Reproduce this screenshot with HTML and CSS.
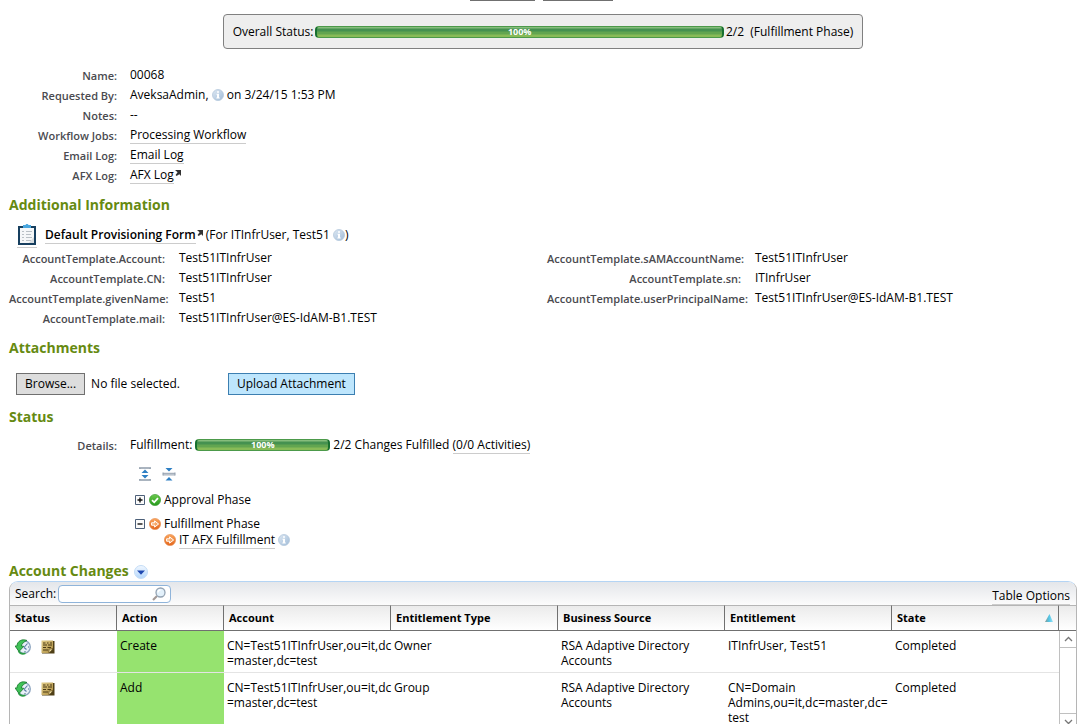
FILE: index.html
```html
<!DOCTYPE html>
<html lang="en">
<head>
<meta charset="utf-8">
<title>Change Request 00068</title>
<link rel="stylesheet" href="styles.css">
</head>
<body>
<svg class="defs" aria-hidden="true">
  <defs>
    <linearGradient id="g-info" x1="0" y1="0" x2="1" y2="1"><stop offset="0" stop-color="#dfe9f3"/><stop offset="1" stop-color="#9fbbd8"/></linearGradient>
    <linearGradient id="g-ok" x1="0" y1="0" x2="0" y2="1"><stop offset="0" stop-color="#6cc94e"/><stop offset="1" stop-color="#259a1c"/></linearGradient>
    <linearGradient id="g-go" x1="0" y1="0" x2="0" y2="1"><stop offset="0" stop-color="#f9a65e"/><stop offset="1" stop-color="#e4651b"/></linearGradient>
    <linearGradient id="g-note" x1="0" y1="0" x2="1" y2="1"><stop offset="0" stop-color="#e2cd8a"/><stop offset="1" stop-color="#a98a3e"/></linearGradient>
    <linearGradient id="g-drop" x1="0" y1="0" x2="0" y2="1"><stop offset="0" stop-color="#f2f8ff"/><stop offset="1" stop-color="#b4d6fb"/></linearGradient>
    <linearGradient id="g-sort" x1="0" y1="0" x2="1" y2="0"><stop offset="0" stop-color="#8a9a92"/><stop offset=".5" stop-color="#4fc4e6"/><stop offset="1" stop-color="#9be4f7"/></linearGradient>
    <symbol id="i-info" viewBox="0 0 12 12"><circle cx="6" cy="6" r="5.5" fill="url(#g-info)" stroke="#b4c8dc" stroke-width=".8"/><path d="M5 2.3h2v1.4H5zM4.5 4.8H7v3.6h.8v1H4.3v-1H5V5.8h-.5z" fill="#fff"/></symbol>
    <symbol id="i-ext" viewBox="0 0 6 6"><path d="M0 0h6v6L4.3 4.2 1.6 6 .6 5 2.6 2.3z" fill="#333"/></symbol>
    <symbol id="i-ok" viewBox="0 0 12 12"><circle cx="6" cy="6" r="5.6" fill="url(#g-ok)" stroke="#2f9427" stroke-width=".6"/><path d="M3 6.2l2.2 2.1L9 4.1" fill="none" stroke="#fff" stroke-width="1.8"/></symbol>
    <symbol id="i-go" viewBox="0 0 12 12"><circle cx="6" cy="6" r="5.6" fill="url(#g-go)" stroke="#e58a4a" stroke-width=".6"/><path d="M2.600 4.800h3V2.900L9.600 6 5.600 9.100V7.200h-3z" fill="#f7a868" stroke="#fff" stroke-width="1"/></symbol>
    <symbol id="i-history" viewBox="0 0 16 16"><circle cx="9" cy="8" r="6.300" fill="#e9f0f8" stroke="#8ba3be" stroke-width="1.300"/><path d="M9 8.500l3.500-4M9 8.500l2.500 2" stroke="#5a7aa5" stroke-width="1.100"/><path d="M14 8h-1M10 13v-1" stroke="#4a6a92"/><path d="M12 1.500C7-.5 2.300 2 1.900 7L0 7l4 5.500L8.800 7.300 6.300 7C6.800 4.500 9 2.800 12 1.500z" fill="#3fc257" stroke="#16752b" stroke-width=".8"/><path d="M3.500 12c1.500 2.500 4.500 3.300 7 2.300" fill="none" stroke="#2b9c45" stroke-width="1.600"/></symbol>
    <symbol id="i-note" viewBox="0 0 14 14"><path d="M1 1h12.500v12.500H1z" fill="#4f3f16"/><path d="M.5.500h11.500V8l-4 5H.5z" fill="url(#g-note)"/><path d="M2 3h2.500M6 3h1.500M9 3h2M2 5h4M7 5h4M2 7.500h3M6.500 7.500H10M2 10h5" stroke="#4b3b15" stroke-width="1.100"/><path d="M8 13V9h4z" fill="#f0dd9d" stroke="#4b3b15" stroke-width=".6"/></symbol>
  </defs>
</svg>

<div class="tabs-edge"><span class="edge edge-a"></span><span class="edge edge-b"></span></div>

<section class="overall">
  <span>Overall Status:</span>
  <div class="bar" role="progressbar" aria-valuenow="100" aria-label="Overall status">100%</div>
  <span>2/2&nbsp; (Fulfillment Phase)</span>
</section>

<main>
  <dl class="fields summary">
    <dt>Name:</dt><dd>00068</dd>
    <dt>Requested By:</dt><dd>AveksaAdmin, <svg class="info"><use href="#i-info"/></svg> on 3/24/15 1:53 PM</dd>
    <dt>Notes:</dt><dd>--</dd>
    <dt>Workflow Jobs:</dt><dd><a href="#jobs">Processing Workflow</a></dd>
    <dt>Email Log:</dt><dd><a href="#email">Email Log</a></dd>
    <dt>AFX Log:</dt><dd><a href="#afx">AFX Log</a><svg class="ext"><use href="#i-ext"/></svg></dd>
  </dl>

  <h2>Additional Information</h2>
  <div class="form-title">
    <a href="#form" class="clip" aria-label="Form">
      <svg viewBox="0 0 20 23" width="20" height="23"><path d="M1 3h18v19H1z" fill="#173f5f"/><path d="M3 5h14v15H3z" fill="#f5f7f8"/><path d="M6 4V2h2.500C8.500.5 11.500.5 11.500 2H14v3H6z" fill="#4aa7df"/><path d="M5 8.500h2M5 11.500h2M5 14.500h2M5 17.500h2M9 8.500h6M9 11.500h5M9 14.500h6M9 17.500h5" stroke="#b9c0c5"/><path d="M12 20l5-6v6z" fill="#d6dbde"/></svg>
    </a>
    <span><a href="#form" class="strong">Default Provisioning Form</a><svg class="ext"><use href="#i-ext"/></svg> (For ITInfrUser, Test51 <svg class="info"><use href="#i-info"/></svg>)</span>
  </div>
  <div class="template">
    <dl class="fields left">
      <dt>AccountTemplate.Account:</dt><dd>Test51ITInfrUser</dd>
      <dt>AccountTemplate.CN:</dt><dd>Test51ITInfrUser</dd>
      <dt>AccountTemplate.givenName:</dt><dd>Test51</dd>
      <dt>AccountTemplate.mail:</dt><dd>Test51ITInfrUser@ES-IdAM-B1.TEST</dd>
    </dl>
    <dl class="fields right">
      <dt>AccountTemplate.sAMAccountName:</dt><dd>Test51ITInfrUser</dd>
      <dt>AccountTemplate.sn:</dt><dd>ITInfrUser</dd>
      <dt>AccountTemplate.userPrincipalName:</dt><dd>Test51ITInfrUser@ES-IdAM-B1.TEST</dd>
    </dl>
  </div>

  <h2>Attachments</h2>
  <div class="attach">
    <div class="picker"><button type="button" class="browse">Browse...</button><span>No file selected.</span></div>
    <button type="button" class="upload">Upload Attachment</button>
  </div>

  <h2>Status</h2>
  <dl class="fields summary">
    <dt>Details:</dt>
    <dd class="progress"><span>Fulfillment:</span><div class="bar" role="progressbar" aria-valuenow="100" aria-label="Fulfillment">100%</div><span>2/2 Changes Fulfilled <a href="#activities">(0/0 Activities)</a></span></dd>
  </dl>
  <div class="tree">
    <div class="tools">
      <button type="button" aria-label="Expand all"><svg viewBox="0 0 14 14"><path d="M1 1h12M1 13h12" stroke="#8f9cab" stroke-width="1.500"/><path d="M2 1v1M12 1v1M2 13v-1M12 13v-1" stroke="#8f9cab"/><path d="M7 2.500L10.500 6h-7zM7 11.500L10.500 8h-7z" fill="#2d7fc4"/></svg></button>
      <button type="button" aria-label="Collapse all"><svg viewBox="0 0 14 14"><path d="M1 5.500v3M13 5.500v3M1 6.300h12M1 7.900h12" stroke="#8f9cab"/><path d="M3.500 1h7L7 4.500zM3.500 13.500h7L7 10z" fill="#2d7fc4"/></svg></button>
    </div>
    <div class="node">
      <button type="button" class="twist" aria-label="Expand"><svg viewBox="0 0 11 11"><path d="M.5.500h9v9h-9z" fill="#fafafa" stroke="#4c5f78"/><path d="M2.500 5h5M5 2.500v5" stroke="#111" stroke-width="1.400"/></svg></button>
      <svg class="dot"><use href="#i-ok"/></svg><span>Approval Phase</span>
    </div>
    <div class="node">
      <button type="button" class="twist" aria-label="Collapse"><svg viewBox="0 0 11 11"><path d="M.5.500h9v9h-9z" fill="#fafafa" stroke="#4c5f78"/><path d="M2.500 5h5" stroke="#111" stroke-width="1.400"/></svg></button>
      <svg class="dot"><use href="#i-go"/></svg><span>Fulfillment Phase</span>
    </div>
    <div class="node child">
      <svg class="dot"><use href="#i-go"/></svg><span><a href="#task">IT AFX Fulfillment</a> <svg class="info"><use href="#i-info"/></svg></span>
    </div>
  </div>

  <h2 class="changes">Account Changes
    <button type="button" aria-label="Menu"><svg viewBox="0 0 14 14"><circle cx="7" cy="7" r="6.500" fill="url(#g-drop)" stroke="#c4dcf6"/><path d="M3 5.500h8L7 9.800z" fill="#1f48b0"/></svg></button>
  </h2>
  <section class="panel">
    <div class="toolbar">
      <div class="search">
        <label for="q">Search:</label>
        <div class="box"><input id="q" type="text"><svg viewBox="0 0 14 14"><path d="M5 9l-4 4" stroke="#a49a96" stroke-width="2.200"/><circle cx="8.500" cy="5.500" r="4.500" fill="#e3f1fb" stroke="#94a3b3" stroke-width="1.300"/><path d="M6 5.500A2.500 2.500 0 0 1 8.500 3" fill="none" stroke="#fff" stroke-width="1.300"/></svg></div>
      </div>
      <a href="#options">Table Options</a>
    </div>
    <div class="grid">
      <table>
        <colgroup><col class="narrow"><col class="narrow"><col><col><col><col><col></colgroup>
        <thead>
          <tr><th>Status</th><th>Action</th><th>Account</th><th>Entitlement Type</th><th>Business Source</th><th>Entitlement</th><th><div class="sorted">State<svg viewBox="0 0 8 8"><path d="M4.500 0L8 8H0z" fill="url(#g-sort)"/></svg></div></th></tr>
        </thead>
        <tbody>
          <tr>
            <td><div class="icons"><svg class="hist"><use href="#i-history"/></svg><svg class="note"><use href="#i-note"/></svg></div></td>
            <td class="act">Create</td><td>CN=Test51ITInfrUser,ou=it,dc<wbr>=master,dc=test</td><td>Owner</td><td>RSA Adaptive Directory Accounts</td><td>ITInfrUser, Test51</td><td>Completed</td>
          </tr>
          <tr>
            <td><div class="icons"><svg class="hist"><use href="#i-history"/></svg><svg class="note"><use href="#i-note"/></svg></div></td>
            <td class="act">Add</td><td>CN=Test51ITInfrUser,ou=it,dc<wbr>=master,dc=test</td><td>Group</td><td>RSA Adaptive Directory Accounts</td><td>CN=Domain Admins,ou=it,dc=master,dc=<wbr>test</td><td>Completed</td>
          </tr>
        </tbody>
      </table>
      <div class="rail">
        <div class="rail-head"></div>
        <div class="rail-body">
          <button type="button" aria-label="Scroll up"><svg viewBox="0 0 9 6"><path d="M1 5l3.500-3.500L8 5" fill="none" stroke="#777" stroke-width="1.300"/></svg></button>
          <button type="button" aria-label="Scroll down"><svg viewBox="0 0 9 6"><path d="M1 1l3.500 3.500L8 1" fill="none" stroke="#777" stroke-width="1.300"/></svg></button>
        </div>
      </div>
    </div>
  </section>
</main>
</body>
</html>
```
FILE: styles.css
```css
* { box-sizing: border-box; }
html { overflow: hidden; }
body {
  margin: 0;
  background: #fff;
  color: #000;
  font: 12px/20px "Open Sans", "Noto Sans", sans-serif;
}
svg { display: inline-block; flex: none; }
button { font: inherit; color: inherit; cursor: pointer; }
a { color: inherit; text-decoration: none; border-bottom: 1px solid #ccc; }
.defs { position: absolute; width: 0; height: 0; }

.tabs-edge { display: flex; justify-content: center; gap: 8px; margin-bottom: 13px; padding-right: 3px; }
.edge { height: 1px; background: #707070; }
.edge-a { width: 65px; }
.edge-b { width: 70px; }

.overall {
  display: flex;
  align-items: center;
  gap: 2px;
  width: 59%;
  height: 35px;
  margin: 0 auto 16px;
  padding: 0 9px;
  background: #eee;
  border: 1px solid #808080;
  border-radius: 4px;
  white-space: nowrap;
}
.bar {
  flex: 1;
  height: 12px;
  border: 1px solid #4c9a4a;
  border-left: 2px solid #17702f;
  border-right: 2px solid #17702f;
  border-radius: 4px;
  background: linear-gradient(#86bd7c 0 1px, #459150 2px 4px, #62a550 5px 7px, #88bb57 8px);
  color: #fff;
  font-size: 9px;
  font-weight: bold;
  line-height: 10px;
  text-align: center;
}

main { padding: 0 9px; }
.fields { display: grid; column-gap: 13px; margin: 0; }
.summary { grid-template-columns: 108px 1fr; }
.left { grid-template-columns: 156px 1fr; column-gap: 14px; }
.right { grid-template-columns: 194px 1fr; column-gap: 14px; align-content: start; }
dt { padding-top: 1px; height: 20px; font-size: 11px; font-weight: 600; color: #4a4a4f; text-align: right; white-space: nowrap; }
dd { margin: 0; height: 20px; white-space: nowrap; }
.info { width: 12px; height: 12px; vertical-align: -2px; }
.ext { width: 6px; height: 6px; margin-left: 1px; vertical-align: 3px; }

h2 { margin: 8px 0 6px; font-size: 14px; line-height: 24px; font-weight: bold; color: #668a11; }
.form-title { display: flex; gap: 8px; padding-left: 8px; height: 25px; }
.clip { height: 25px; line-height: 0; }
.strong { font-weight: 600; }
.form-title span { padding-top: 2px; }
.template { display: grid; grid-template-columns: 1fr 1fr; gap: 8px; }

.attach { display: flex; align-items: center; gap: 48px; padding: 6px 7px 2px; height: 31px; }
.picker { display: flex; align-items: center; gap: 6px; }
.browse, .upload { height: 22px; padding: 0 8px; line-height: 18px; border: 1px solid #707070; background: #ddd; }
.upload { border-color: #3c7fb1; background: #bee6fd; }

.progress { display: flex; align-items: center; gap: 3px; }
.progress .bar { flex: 0 0 135px; }
.tree { padding: 12px 0 0 126px; }
.tools { display: flex; gap: 10px; padding-left: 3px; height: 23px; }
.tools button, .twist, .changes button { padding: 0; border: 0; background: none; line-height: 0; }
.tools svg { width: 14px; height: 14px; }
.tools button { align-self: start; }
.node { display: flex; align-items: center; gap: 3px; height: 20px; }
.node + .node { margin-top: 4px; }
.node .twist svg { width: 11px; height: 11px; }
.node .dot { width: 12px; height: 12px; }
.node.child { height: 16px; margin-top: -2px; padding-left: 29px; }

.changes { display: flex; align-items: center; gap: 5px; margin: 12px 0 0; line-height: 21px; }
.changes button svg { width: 14px; height: 14px; }
.changes button { padding-top: 3px; }

.panel { border: 1px solid #b5b5b5; border-top-color: #b4d4f4; border-radius: 9px 9px 0 0; background: #fff; }
.toolbar {
  display: flex;
  align-items: center;
  justify-content: space-between;
  height: 23px;
  padding: 0 6px 0 5px;
  border-radius: 8px 8px 0 0;
  background: linear-gradient(#e4e6ea, #fcfcfc);
}
.toolbar a { margin-top: 6px; line-height: 16px; }
.search, .box { display: flex; align-items: center; }
.search { gap: 2px; }
.box { width: 113px; height: 18px; padding-right: 4px; border: 1px solid #8fb4da; border-radius: 4px; background: #fff; }
.box input { flex: 1; min-width: 0; height: 14px; border: 0; outline: 0; background: none; font: inherit; }
.box svg { width: 14px; height: 14px; }

.grid { display: flex; }
table { flex: 1; width: 100%; border-collapse: separate; border-spacing: 0; table-layout: fixed; }
.narrow { width: 107px; }
th, .rail-head {
  height: 26px;
  border-top: 1px solid #b5b5b5;
  border-bottom: 1px solid #707070;
  background: linear-gradient(#ebebeb, #fff);
}
th { padding: 0 5px; border-right: 1px solid #707070; font-size: 11px; font-weight: bold; text-align: left; line-height: 24px; }
.sorted { display: flex; align-items: center; justify-content: space-between; }
.sorted svg { width: 8px; height: 8px; }
td { padding: 7px 3px 4px; border-bottom: 1px solid #e4e4e4; line-height: 15px; vertical-align: top; }
.act { background: #96e36f; }
.icons { display: flex; align-items: center; gap: 10px; padding: 1px 2px; }
.hist { width: 16px; height: 16px; }
.note { width: 14px; height: 14px; }
.rail { display: flex; flex-direction: column; width: 17px; }
.rail-body { flex: 1; display: flex; flex-direction: column; justify-content: space-between; border-left: 1px solid #c0c0c0; }
.rail-body button { display: grid; place-items: center; height: 17px; padding: 0; border: 0; border-bottom: 1px solid #c0c0c0; background: #fff; }
.rail-body button + button { border-top: 1px solid #c0c0c0; }
.rail-body svg { width: 9px; height: 6px; }
```
